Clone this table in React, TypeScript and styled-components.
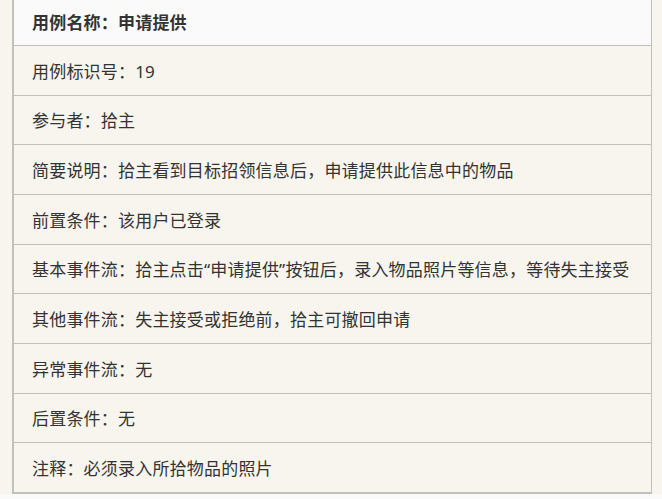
import React from "react";
import styled, { createGlobalStyle } from "styled-components";

const rows = [
    "用例标识号：19",
    "参与者：拾主",
    "简要说明：拾主看到目标招领信息后，申请提供此信息中的物品",
    "前置条件：该用户已登录",
    "基本事件流：拾主点击“申请提供”按钮后，录入物品照片等信息，等待失主接受",
    "其他事件流：失主接受或拒绝前，拾主可撤回申请",
    "异常事件流：无",
    "后置条件：无",
    "注释：必须录入所拾物品的照片",
];

const App = () => {
    return (
        <>
            <GlobalStyle />
            <Page>
                <Table>
                    <HeadRow>用例名称：申请提供</HeadRow>
                    {rows.map((text) => (
                        <Row key={text}>{text}</Row>
                    ))}
                </Table>
                <NextHead />
            </Page>
        </>
    );
};
export default App;

const GlobalStyle = createGlobalStyle`
  html, body {
    margin: 0;
    padding: 0;
    background: #f8f5ee;
  }
  body {
    font-family: "Noto Sans", "Noto Sans CJK SC", sans-serif;
  }
`;

const Page = styled.div`
    width: 662px;
    height: 499px;
    overflow: hidden;
    background: #f8f5ee;
`;
const Table = styled.div`
    margin-left: 12px;
    width: 640px;
    box-sizing: border-box;
    border-left: 2px solid #c2c0bd;
    border-right: 1px solid #c2c0bd;
    border-bottom: 2px solid #c2c0bd;
    display: flex;
    flex-direction: column;
`;
const Cell = styled.div`
    box-sizing: border-box;
    display: flex;
    align-items: center;
    padding: 0 8px 0 18px;
    border-bottom: 1px solid #c2c0bd;
    font-size: 17px;
    letter-spacing: 0.2px;
    color: #333333;
    white-space: nowrap;
`;
const HeadRow = styled(Cell)`
    height: 46px;
    background: #fafafa;
    font-weight: bold;
    padding-bottom: 2px;
`;
const Row = styled(Cell)`
    height: 49.67px;
    background: #f8f5ee;
    &:last-child {
        border-bottom: none;
        height: 48.67px;
    }
`;
const NextHead = styled.div`
    height: 10px;
    background: #fafafa;
`;
